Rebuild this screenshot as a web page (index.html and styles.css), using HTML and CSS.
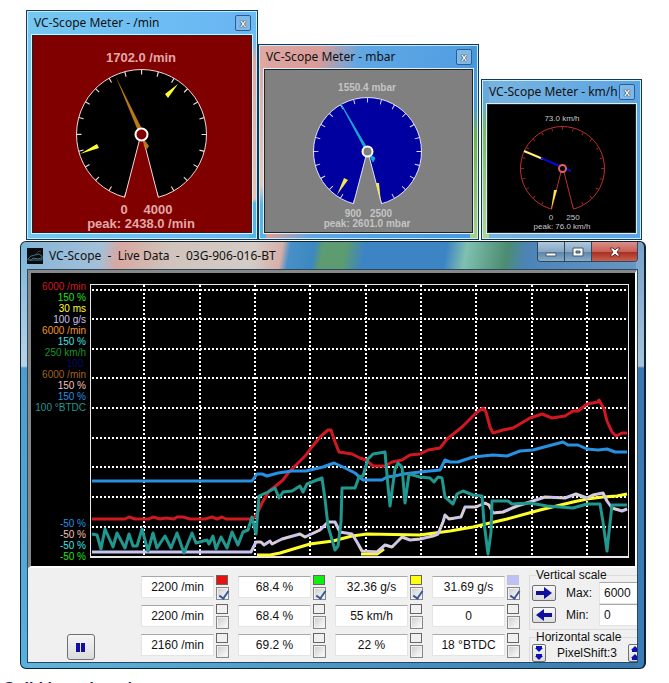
FILE: index.html
```html
<!DOCTYPE html>
<html lang="en">
<head>
  <meta charset="UTF-8">
  <meta name="viewport" content="width=device-width, initial-scale=1.0">
  <title>VC-Scope</title>
  <link rel="stylesheet" href="styles.css">
</head>
<body>
  <!-- Meter windows -->
  <div class="meters">
    <section class="meter meter-rpm">
      <header class="meter-title">
        <h2>VC-Scope Meter - /min</h2>
        <button class="meter-close" aria-label="Close">x</button>
      </header>
      <svg class="face" viewBox="33 36 218 196">
        <path class="dial" d="M139.5 140 L124.7 197.3 A65 65 0 1 1 158.3 197.3 L143.5 140 Z"/>
        <path class="ticks" pathLength="22" d="M125.3 194.9 A62.5 62.5 0 1 1 157.7 194.9"/>
        <path d="M115.5 76 L138 131 L142 129 Z M143 138 L149 146 L147 149 L144 147 Z" fill="#b87818"/>
        <path d="M178 84 L165 94 L168 98 Z M80 154 L97 144 L99 148 Z" fill="#ffff30"/>
        <circle class="hub" cx="141.5" cy="134.5" r="6"/>
        <text x="141" y="62">1702.0 /min</text>
        <text x="124" y="214">0</text>
        <text x="158" y="214">4000</text>
        <text x="141" y="228">peak: 2438.0 /min</text>
      </svg>
    </section>

    <section class="meter meter-mbar">
      <header class="meter-title">
        <h2>VC-Scope Meter - mbar</h2>
        <button class="meter-close" aria-label="Close">x</button>
      </header>
      <svg class="face" viewBox="265 70 207 162">
        <path class="dial" d="M366 156 L353.5 203.7 A54 54 0 1 1 381.5 203.7 L369 156 Z"/>
        <path class="ticks" pathLength="22" d="M354.1 201.3 A51.5 51.5 0 1 1 380.9 201.3"/>
        <path d="M341 104 L365 149 L367 148 Z M369 154 L375 158 L373 162 Z" fill="#18a8d8" stroke="#18a8d8"/>
        <path d="M337 195 L344 178 L348 180 Z M381 203 L376 183 L379 183 Z" fill="#f4e850"/>
        <circle class="hub" cx="367.5" cy="151.5" r="5"/>
        <text x="367" y="91">1550.4 mbar</text>
        <text x="353" y="217">900</text>
        <text x="381" y="217">2500</text>
        <text x="367" y="227">peak: 2601.0 mbar</text>
      </svg>
    </section>

    <section class="meter meter-kmh">
      <header class="meter-title">
        <h2>VC-Scope Meter - km/h</h2>
        <button class="meter-close" aria-label="Close">x</button>
      </header>
      <svg class="face" viewBox="488 105 147 127">
        <path class="dial" d="M561 172 L551.6 209.1 A42 42 0 1 1 573.4 209.1 L564 172 Z"/>
        <path class="ticks" pathLength="22" d="M552.1 207.2 A40 40 0 1 1 572.9 207.2"/>
        <path d="M524 151 L543 159" stroke="#fff080" stroke-width="2"/>
        <path d="M541 158 L571 171" stroke="#0808d0" stroke-width="2"/>
        <path d="M551 210 L554 190 L557 190 Z" fill="#ffe840"/>
        <circle class="hub" cx="562.5" cy="168.5" r="3.5"/>
        <text x="562" y="121">73.0 km/h</text>
        <text x="551" y="220">0</text>
        <text x="573" y="220">250</text>
        <text x="562" y="229">peak: 76.0 km/h</text>
      </svg>
    </section>
  </div>

  <!-- Live data window -->
  <main class="scope">
    <header class="scope-title">
      <svg class="app-icon" viewBox="0 0 16 16">
        <path d="M0 0H16V16H0Z" fill="#080c10"/>
        <path d="M1 11 L4 8 L8 7 L12 6 L15 8 V12 H1 Z M3 13 L6 10 L11 11 L14 10" fill="none" stroke="#48707c"/>
        <path d="M9 6 L12 3 L14 4" fill="none" stroke="#702028"/>
      </svg>
      <h1>VC-Scope&nbsp; -&nbsp; Live Data&nbsp; -&nbsp; 03G-906-016-BT</h1>
      <div class="window-buttons">
        <button aria-label="Minimize"><svg viewBox="0 0 14 12"><path d="M2 7h10v3H2z" fill="#fff" stroke="#46566a"/></svg></button>
        <button aria-label="Maximize"><svg viewBox="0 0 14 12"><path d="M2 2h10v8H2z M5 5v2h4V5z" fill="#fff" fill-rule="evenodd" stroke="#46566a"/></svg></button>
        <button class="close" aria-label="Close"><svg viewBox="0 0 14 12"><path d="M2 2h3l2 2 2-2h3L9 6l3 4H9L7 8l-2 2H2l3-4z" fill="#fff" stroke="#6a3030"/></svg></button>
      </div>
    </header>

    <div class="client">
      <div class="plot">
        <div class="axis">
          <ul>
            <li class="red">6000 /min</li>
            <li class="green">150 %</li>
            <li class="yellow">30 ms</li>
            <li class="lavender">100 g/s</li>
            <li class="orange">6000 /min</li>
            <li class="cyan">150 %</li>
            <li class="darkgreen">250 km/h</li>
            <li class="navy">100&nbsp;</li>
            <li class="brown">6000 /min</li>
            <li class="pink">150 %</li>
            <li class="blue">150 %</li>
            <li class="teal">100 °BTDC</li>
          </ul>
          <ul>
            <li class="blue">-50 %</li>
            <li class="pink">-50 %</li>
            <li class="cyan">-50 %</li>
            <li class="green">-50 %</li>
          </ul>
        </div>
        <svg class="chart" viewBox="90 285 539 274">
          <path class="grid" d="M92 291H627M92 320H627M92 350H627M92 379H627M92 409H627M92 439H627M92 468H627M92 498H627M92 528H627"/>
          <path class="grid" d="M144 286V557M200 286V557M255 286V557M310 286V557M366 286V557M421 286V557M476 286V557M532 286V557M587 286V557"/>
          <path class="frame" d="M90 285H629V559H90Z M91 286V557H628V286Z" fill-rule="evenodd"/>
          <polyline class="trace yellow" points="257,556 270,556 280,554 290,551 310,545 333,542 352,537 367,535 420,536 450,532 473,528 507,520 540,511 573,503 587,500 603,498 617,497 627,495"/>
          <polyline class="trace yellow" points="361,555 377,555 384,550"/>
          <polyline class="trace lavender" points="92,553 251,553 256,543 261,543 264,546 270,542 272,545 282,540 300,535 305,538 320,531 328,523 335,523 340,533 352,535 357,543 362,552 377,553 385,546 392,548 402,538 410,541 420,540 433,537 438,535 443,523 445,516 449,520 461,518 465,508 476,508 485,504 489,506 493,514 503,513 517,507 533,502 545,498 565,499 576,495 587,499 593,496 603,494 607,502 612,509 622,512 627,510"/>
          <polyline class="trace cream" points="256,543 261,543 264,546 270,542 272,545 282,540 300,535 305,538 320,531 328,523 335,523 340,533 352,535 357,543 362,552 377,553 385,546 392,548 402,538 410,541 420,540 433,537 438,535 443,523 445,516 449,520 461,518 465,508 476,508 485,504 489,506 493,514 503,513 517,507 533,502 545,498 565,499 576,495 587,499 593,496 603,494 607,502 612,509 622,512 627,510"/>
          <polyline class="trace red" points="92,520 125,520 129,518 135,520 149,520 153,518 160,520 166,519 174,520 177,518 183,518 190,520 205,520 212,518 217,520 222,518 226,520 252,520 256,517 262,504 269,492 277,486 283,481 289,473 296,466 306,456 311,449 321,437 328,431 331,431 335,443 339,453 352,455 360,459 366,461 373,467 385,467 392,463 402,461 410,456 420,455 428,451 440,449 447,440 462,428 476,414 483,409 486,413 490,428 493,434 503,431 513,429 530,419 542,415 552,419 565,417 573,412 578,412 587,405 598,403 599,401 604,410 607,422 612,433 616,437 622,434 627,434"/>
          <polyline class="trace blue" points="92,482 252,482 257,475 262,475 267,477 278,474 292,472 306,472 310,471 323,468 334,464 343,468 355,474 363,481 382,481 387,478 395,477 403,475 420,473 440,471 445,461 450,463 458,463 473,458 493,456 507,457 520,452 533,451 563,443 568,446 578,446 587,450 598,451 607,450 615,453 627,453"/>
          <polyline class="trace teal" points="92,535 97,536 101,550 105,530 113,548 117,534 125,549 129,535 133,547 137,547 142,530 148,552 153,534 157,549 165,537 171,549 177,534 184,554 192,534 196,544 207,541 209,545 213,537 216,550 221,538 227,549 232,533 238,546 243,533 248,531 252,518 256,535 259,497 268,493 275,489 279,499 283,493 292,492 300,487 303,493 307,485 322,479 325,500 328,527 335,551 338,547 341,523 342,489 355,489 359,478 363,477 368,460 373,455 385,453 388,487 390,507 395,470 398,464 402,468 405,504 409,475 420,478 430,479 434,483 438,478 442,479 445,498 453,505 457,495 463,492 473,496 482,497 484,523 488,555 491,533 492,502 508,502 512,505 530,504 547,507 573,509 587,505 600,505 603,523 607,552 609,533 612,506 627,506"/>
        </svg>
      </div>

      <div class="controls">
        <div class="run">
          <button class="pause" aria-label="Pause"><svg viewBox="0 0 10 9"><path d="M0 0h4v9H0zM5 0h4v9H5z" fill="#1010a0"/></svg></button>
        </div>

        <div class="readouts">
          <div class="readout"><input type="text" value="2200 /min" aria-label="Speed 1" readonly><div><i class="swatch on-red"></i><input type="checkbox" aria-label="Show speed 1" checked></div></div>
          <div class="readout"><input type="text" value="68.4 %" aria-label="Load 1" readonly><div><i class="swatch on-green"></i><input type="checkbox" aria-label="Show load 1" checked></div></div>
          <div class="readout"><input type="text" value="32.36 g/s" aria-label="Air mass 1" readonly><div><i class="swatch on-yellow"></i><input type="checkbox" aria-label="Show air mass 1" checked></div></div>
          <div class="readout"><input type="text" value="31.69 g/s" aria-label="Air mass 2" readonly><div><i class="swatch on-lavender"></i><input type="checkbox" aria-label="Show air mass 2" checked></div></div>

          <div class="readout"><input type="text" value="2200 /min" aria-label="Speed 2" readonly><div><i class="swatch"></i><input type="checkbox" aria-label="Show speed 2"></div></div>
          <div class="readout"><input type="text" value="68.4 %" aria-label="Load 2" readonly><div><i class="swatch"></i><input type="checkbox" aria-label="Show load 2"></div></div>
          <div class="readout"><input type="text" value="55 km/h" aria-label="Road speed" readonly><div><i class="swatch"></i><input type="checkbox" aria-label="Show road speed"></div></div>
          <div class="readout"><input type="text" value="0" aria-label="Status" readonly><div><i class="swatch"></i><input type="checkbox" aria-label="Show status"></div></div>

          <div class="readout"><input type="text" value="2160 /min" aria-label="Speed 3" readonly><div><i class="swatch"></i><input type="checkbox" aria-label="Show speed 3"></div></div>
          <div class="readout"><input type="text" value="69.2 %" aria-label="Load 3" readonly><div><i class="swatch"></i><input type="checkbox" aria-label="Show load 3"></div></div>
          <div class="readout"><input type="text" value="22 %" aria-label="Duty" readonly><div><i class="swatch"></i><input type="checkbox" aria-label="Show duty"></div></div>
          <div class="readout"><input type="text" value="18 °BTDC" aria-label="Timing" readonly><div><i class="swatch"></i><input type="checkbox" aria-label="Show timing"></div></div>
        </div>

        <div class="scales">
          <fieldset class="vertical">
            <legend>Vertical scale</legend>
            <button class="arrow" aria-label="Next trace"><svg viewBox="0 0 16 12"><path d="M0 4h8V0l8 6-8 6V8H0z" fill="#1010a0"/></svg></button>
            <label for="max">Max:</label>
            <input id="max" type="text" value="6000">
            <button class="arrow" aria-label="Previous trace"><svg viewBox="0 0 16 12"><path d="M16 4H8V0L0 6l8 6V8h8z" fill="#1010a0"/></svg></button>
            <label for="min">Min:</label>
            <input id="min" type="text" value="0">
          </fieldset>
          <fieldset class="horizontal">
            <legend>Horizontal scale</legend>
            <button class="step" aria-label="Less"><svg viewBox="0 0 8 14"><path d="M1 0h6v2h1L4 6 0 2h1zM1 8h6v2h1l-4 4-4-4h1z" fill="#1010b0"/></svg></button>
            <span>PixelShift:3</span>
            <button class="step" aria-label="More"><svg viewBox="0 0 8 14"><path d="M1 6h6V4h1L4 0 0 4h1zM1 14h6v-2h1L4 8l-4 4h1z" fill="#1010b0"/></svg></button>
          </fieldset>
        </div>
      </div>
    </div>
  </main>

  <h3 class="caption">Solid based on d</h3>
</body>
</html>
```
FILE: styles.css
```css
* {
  box-sizing: border-box;
}

body {
  margin: 0;
  padding-top: 10px;
  background-color: #fff;
  color: #111;
  font-family: "Liberation Sans", Arial, sans-serif;
  font-size: 12px;
  overflow: hidden;
}

h1,
h2 {
  margin: 0;
  font-family: "Noto Sans", "Segoe UI", sans-serif;
  font-size: 12px;
  font-weight: normal;
  white-space: nowrap;
}

button {
  padding: 0;
}

/* Meter windows */
.meters {
  display: flex;
  align-items: flex-end;
  padding: 0 27px 0 26px;
}

.meter {
  flex: 222 1 0;
  min-width: 0;
  padding: 0 4px 5px;
  border: 1px solid #123a58;
  box-shadow: inset 0 0 0 1px #c8ecfa;
  background: linear-gradient(100deg, #74c4ec 0%, #66b4f0 60%, #8cc4e8 100%);
}

.meter-rpm {
  background: linear-gradient(to top, #58b4e0 0, #58b4e0 36px, transparent 40px) right / 8px 100% no-repeat,
    linear-gradient(to bottom, #6cbcf4 30px, #e0a8a0 50px, #ecc8b8 100%) right / 8px 100% no-repeat,
    linear-gradient(to right, #74c8f0, #68b4f4);
}

.meter-mbar {
  flex-grow: 211;
  background: linear-gradient(to bottom, #4898dc 60px, #70b048 90px, #a8d080 100%) right / 8px 100% no-repeat,
    linear-gradient(to bottom, #e0a8a0 20px, #ecc8b8 140px, #58b4e0 160px) left / 7px 100% no-repeat,
    linear-gradient(105deg, #dca8a4 0, #dc9c98 60px, #60a8e4 100px, #4898e0 100%);
}

.meter-kmh {
  flex-grow: 151;
  margin-left: 2px;
  background: linear-gradient(to bottom, #68a8dc 20px, #80b860 50px, #b0d890 100%) left / 7px 100% no-repeat,
    linear-gradient(to right, #78b4e0, #5ca4e4);
}

.meter-title {
  display: flex;
  align-items: center;
  justify-content: space-between;
  height: 23px;
  padding: 0 2px 0 3px;
}

.meter-close {
  flex: 0 0 16px;
  height: 16px;
  border: 1px solid #2c5c90;
  border-radius: 2px;
  background-color: #80b8e8;
  color: #fff;
  font: bold 11px/12px "Liberation Sans", sans-serif;
  text-shadow: 0 0 1px #000, 0 0 1px #000;
}

.face {
  display: block;
  width: calc(100% - 2px);
  margin: 1px;
  border: 1px solid #222;
  outline: 1px solid #d8f0fa;
  font-size: 13px;
  font-weight: bold;
  text-anchor: middle;
}

.meter-rpm .face {
  background-color: #800000;
  fill: #e0a8a8;
}

.meter-mbar .face {
  background-color: #808080;
  fill: #c4c4c4;
  font-size: 10px;
}

.meter-kmh .face {
  background-color: #000;
  fill: #c8c8c8;
  font-size: 8px;
  font-weight: normal;
}

.dial {
  fill: #000;
  stroke: #f4d8d8;
}

.ticks {
  fill: none;
  stroke: #f4d8d8;
  stroke-width: 5;
  stroke-dasharray: 0.07 0.93;
  stroke-dashoffset: 0.03;
}

.hub {
  fill: #800000;
  stroke: #fff;
  stroke-width: 2;
}

.meter-mbar .dial {
  fill: #0000a0;
  stroke: #e0e0ff;
}

.meter-mbar .ticks {
  stroke: #e0e0ff;
}

.meter-mbar .hub {
  fill: #808080;
}

.meter-kmh .dial,
.meter-kmh .ticks {
  stroke: #c03030;
}

.meter-kmh .ticks {
  stroke-width: 3;
}

.meter-kmh .hub {
  fill: #000;
  stroke: #e06060;
}

/* Live data window */
.scope {
  margin: 1px 23px 0 20px;
  padding: 0 6px 5px;
  border: 1px solid #0c2438;
  border-right-width: 2px;
  border-radius: 6px;
  background: linear-gradient(to bottom, #7cb4d8 0, #b8d4e8 124px, #4c9ccc 126px, #58b0dc 100%) left / 8px 100% no-repeat,
    linear-gradient(to bottom, #78a0c8 0, #a8c4dc 124px, #3c78b0 126px, #3c7cb4 100%) right / 8px 100% no-repeat,
    linear-gradient(to right, #60b4dc, #3878ac) bottom / 100% 8px no-repeat,
    linear-gradient(100deg, #84b4d8 0, #a4c0d8 80px, #d8a8a0 98px, #d0c4bc 150px, #d4ccc8 230px, #d8b0a8 258px, #4890c8 266px, #3c88c0 290px, #5c9c70 298px, #5c9c70 320px, #3c84c4 340px, #3c84c4 420px, #80c0b0 440px, #4c8c70 480px, #4c84b8 500px, #7ca4cc 100%);
}

.scope-title {
  display: flex;
  align-items: center;
  height: 27px;
}

.app-icon {
  width: 16px;
  height: 16px;
  margin-right: 6px;
}

.window-buttons {
  display: flex;
  align-self: flex-start;
  height: 20px;
  margin-left: auto;
  border: 1px solid #30485c;
  border-top: 0;
  border-radius: 0 0 4px 4px;
  overflow: hidden;
}

.window-buttons button {
  width: 27px;
  border: 0;
  border-right: 1px solid #30485c;
  background: linear-gradient(#b0c8dc, #88a8c4 50%, #5c84a8 52%, #88acc8);
}

.window-buttons .close {
  width: 45px;
  border-right: 0;
  background: linear-gradient(#d89088, #c86058 50%, #a82c20 52%, #c86050);
}

.window-buttons svg {
  display: block;
  width: 14px;
  height: 12px;
  margin: auto;
}

.client {
  border: 1px solid #284860;
  background-color: #f0f0f0;
  overflow: hidden;
}

.plot {
  display: flex;
  padding: 11px 6px 8px 4px;
  border: 2px solid #fff;
  border-top: 3px solid #888;
  border-left: 3px solid #888;
  background-color: #000;
}

.axis {
  display: flex;
  flex-direction: column;
  justify-content: space-between;
  flex: 0 0 51px;
  margin: -3px 4px -4px 0;
  text-align: right;
  white-space: nowrap;
}

.axis ul {
  margin: 0;
  padding: 0;
  list-style: none;
  font-size: 10px;
  line-height: 11px;
}

.chart {
  display: block;
  flex: 1;
  min-width: 0;
}

.grid {
  fill: none;
  stroke: #fff;
  stroke-width: 2;
  stroke-dasharray: 2 2;
}

.frame {
  fill: #e8e8e8;
}

.trace {
  fill: none;
  stroke: currentColor;
  stroke-width: 3;
  stroke-linejoin: round;
}

.red { color: #d01820; }
.green { color: #20e020; }
.yellow { color: #ffff28; }
.lavender { color: #c8c4f0; }
.orange { color: #f09828; }
.cyan { color: #40e0e0; }
.darkgreen { color: #109828; }
.navy { color: #08086c; }
.brown { color: #a06420; }
.pink { color: #f0c0b8; }
.blue { color: #2890e0; }
.teal { color: #209890; }

.cream {
  color: #e0d0c4;
  stroke-width: 2;
  stroke-dasharray: 9 7;
}

/* Controls under the plot */
.controls {
  display: flex;
  height: 94px;
}

.run {
  flex: 1;
  display: flex;
  align-items: flex-end;
  padding: 0 0 2px 39px;
}

.pause {
  width: 28px;
  height: 26px;
  border: 1px solid #707070;
  border-radius: 3px;
  background: linear-gradient(#f4f4f4, #dcdcdc);
}

.pause svg {
  width: 10px;
  height: 9px;
}

.readouts {
  display: grid;
  grid-template-columns: repeat(4, 88px);
  gap: 3px 9px;
  align-content: start;
  padding-top: 6px;
}

.readout {
  display: flex;
  align-items: center;
  gap: 2px;
  height: 26px;
}

.readout div {
  display: flex;
  flex-direction: column;
  gap: 2px;
}

input[type="text"] {
  flex: 1;
  min-width: 0;
  height: 22px;
  padding: 0;
  border: 1px solid #e4e4e4;
  border-top-color: #a8a8a8;
  background-color: #fff;
  color: #111;
  font: 12px "Liberation Sans", Arial, sans-serif;
}

.readout input[type="text"] {
  text-align: center;
}

.swatch {
  width: 12px;
  height: 10px;
  border: 1px solid #666;
  background-color: #f0f0f0;
}

.on-red { background-color: #e81010; }
.on-green { background-color: #10f010; }
.on-yellow { background-color: #ffff10; }
.on-lavender { background-color: #c0c0f8; border-color: #c0c0d8; }

input[type="checkbox"] {
  appearance: none;
  width: 13px;
  height: 13px;
  margin: 0;
  border: 1px solid #888;
  background: linear-gradient(135deg, #d0d0d0, #fafafa) content-box #f4f4f4;
  padding: 1px;
}

input[type="checkbox"]:checked::after {
  content: "";
  display: block;
  width: 4px;
  height: 8px;
  margin-left: 3px;
  border: solid #38589c;
  border-width: 0 2px 2px 0;
  transform: rotate(35deg);
}

.scales {
  flex: 0 0 108px;
  min-width: 0;
  margin-left: 9px;
}

fieldset {
  width: 130px;
  margin: 0;
  padding: 0 0 0 2px;
  border: 1px solid #dcdcdc;
}

legend {
  margin-left: 4px;
  padding: 0;
  line-height: 14px;
}

.vertical {
  display: grid;
  grid-template-columns: 24px 35px 60px;
  column-gap: 4px;
  align-items: center;
  align-content: start;
  height: 62px;
}

.vertical label {
  padding-left: 6px;
}

.vertical input {
  padding-left: 4px;
}

.arrow {
  height: 16px;
  border: 1px solid #707070;
  border-radius: 2px;
  background: linear-gradient(#f8f8f8, #dcdcdc);
}

.arrow svg {
  display: block;
  width: 16px;
  height: 12px;
  margin: auto;
}

.horizontal {
  display: flex;
  align-items: center;
  gap: 11px;
}

.step {
  width: 14px;
  height: 18px;
  border: 1px solid #707070;
  border-radius: 2px;
  background: linear-gradient(#f8f8f8, #dcdcdc);
}

.step svg {
  display: block;
  width: 8px;
  height: 14px;
  margin: auto;
}

/* Heading that follows the window */
.caption {
  margin: 10px 0 0 4px;
  color: #202060;
  font-size: 16px;
  line-height: 20px;
}
```
